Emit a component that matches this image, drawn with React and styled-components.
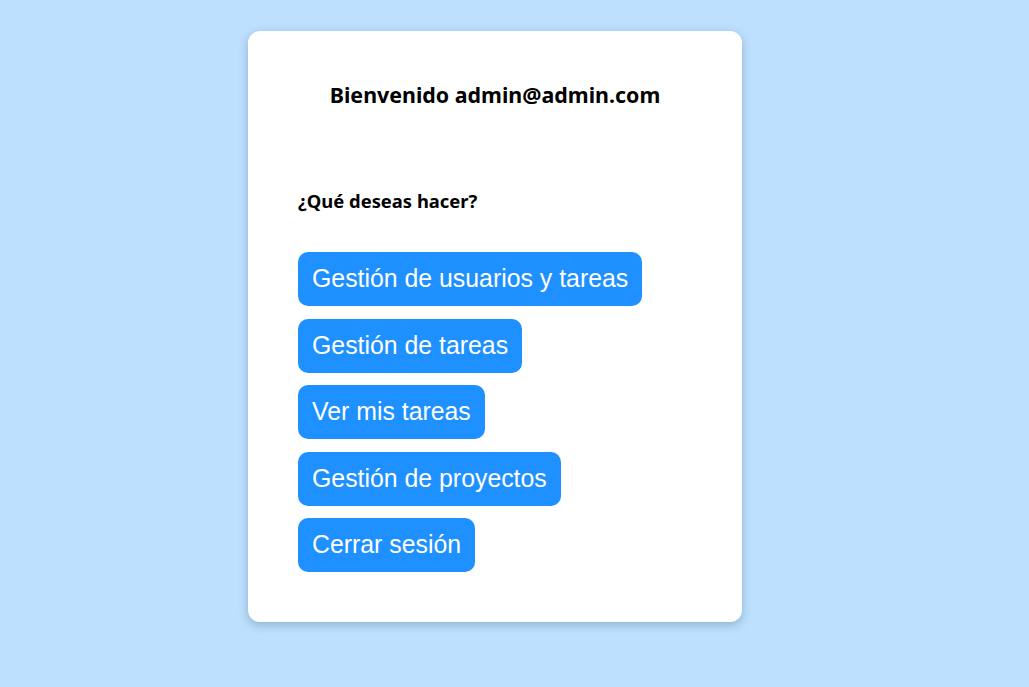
import React from "react";
import styled, { createGlobalStyle } from "styled-components";

const Global = createGlobalStyle`
  html, body { margin: 0; padding: 0; }
  body {
    background: #bde0fe;
    min-height: 687px;
    font-family: "Noto Sans", "Open Sans", sans-serif;
  }
`;

const Page = styled.div`
  display: flex;
  align-items: flex-start;
  padding: 31px 0 0 248px;
`;

const Card = styled.main`
  box-sizing: border-box;
  width: 494px;
  background: #ffffff;
  border-radius: 12px;
  box-shadow: 0 3px 10px rgba(40, 70, 110, 0.3);
  padding: 50px;
  display: flex;
  flex-direction: column;
`;

const Title = styled.h2`
  margin: 0;
  text-align: center;
  font-family: "Noto Sans", sans-serif;
  font-weight: 700;
  font-size: 21.4px;
  line-height: 28px;
  color: #000;
`;

const Subtitle = styled.h3`
  margin: 80px 0 0;
  font-family: "Noto Sans", sans-serif;
  font-weight: 700;
  font-size: 18.4px;
  line-height: 23px;
  color: #000;
`;

const Menu = styled.nav`
  margin-top: 40px;
  display: flex;
  flex-direction: column;
  align-items: flex-start;
  gap: 12.5px;
`;

const ActionButton = styled.button`
  box-sizing: border-box;
  height: 54px;
  padding: 1px 14px 0;
  border: none;
  border-radius: 10px;
  background: #1e90ff;
  color: #ffffff;
  font-family: "Liberation Sans", Arial, sans-serif;
  font-size: 24.85px;
  line-height: 1;
  cursor: pointer;
`;

const actions = [
  "Gestión de usuarios y tareas",
  "Gestión de tareas",
  "Ver mis tareas",
  "Gestión de proyectos",
  "Cerrar sesión",
];

export default function App() {
  return (
    <>
      <Global />
      <Page>
        <Card>
          <Title>Bienvenido admin@admin.com</Title>
          <Subtitle>¿Qué deseas hacer?</Subtitle>
          <Menu>
            {actions.map((a) => (
              <ActionButton key={a}>{a}</ActionButton>
            ))}
          </Menu>
        </Card>
      </Page>
    </>
  );
}
